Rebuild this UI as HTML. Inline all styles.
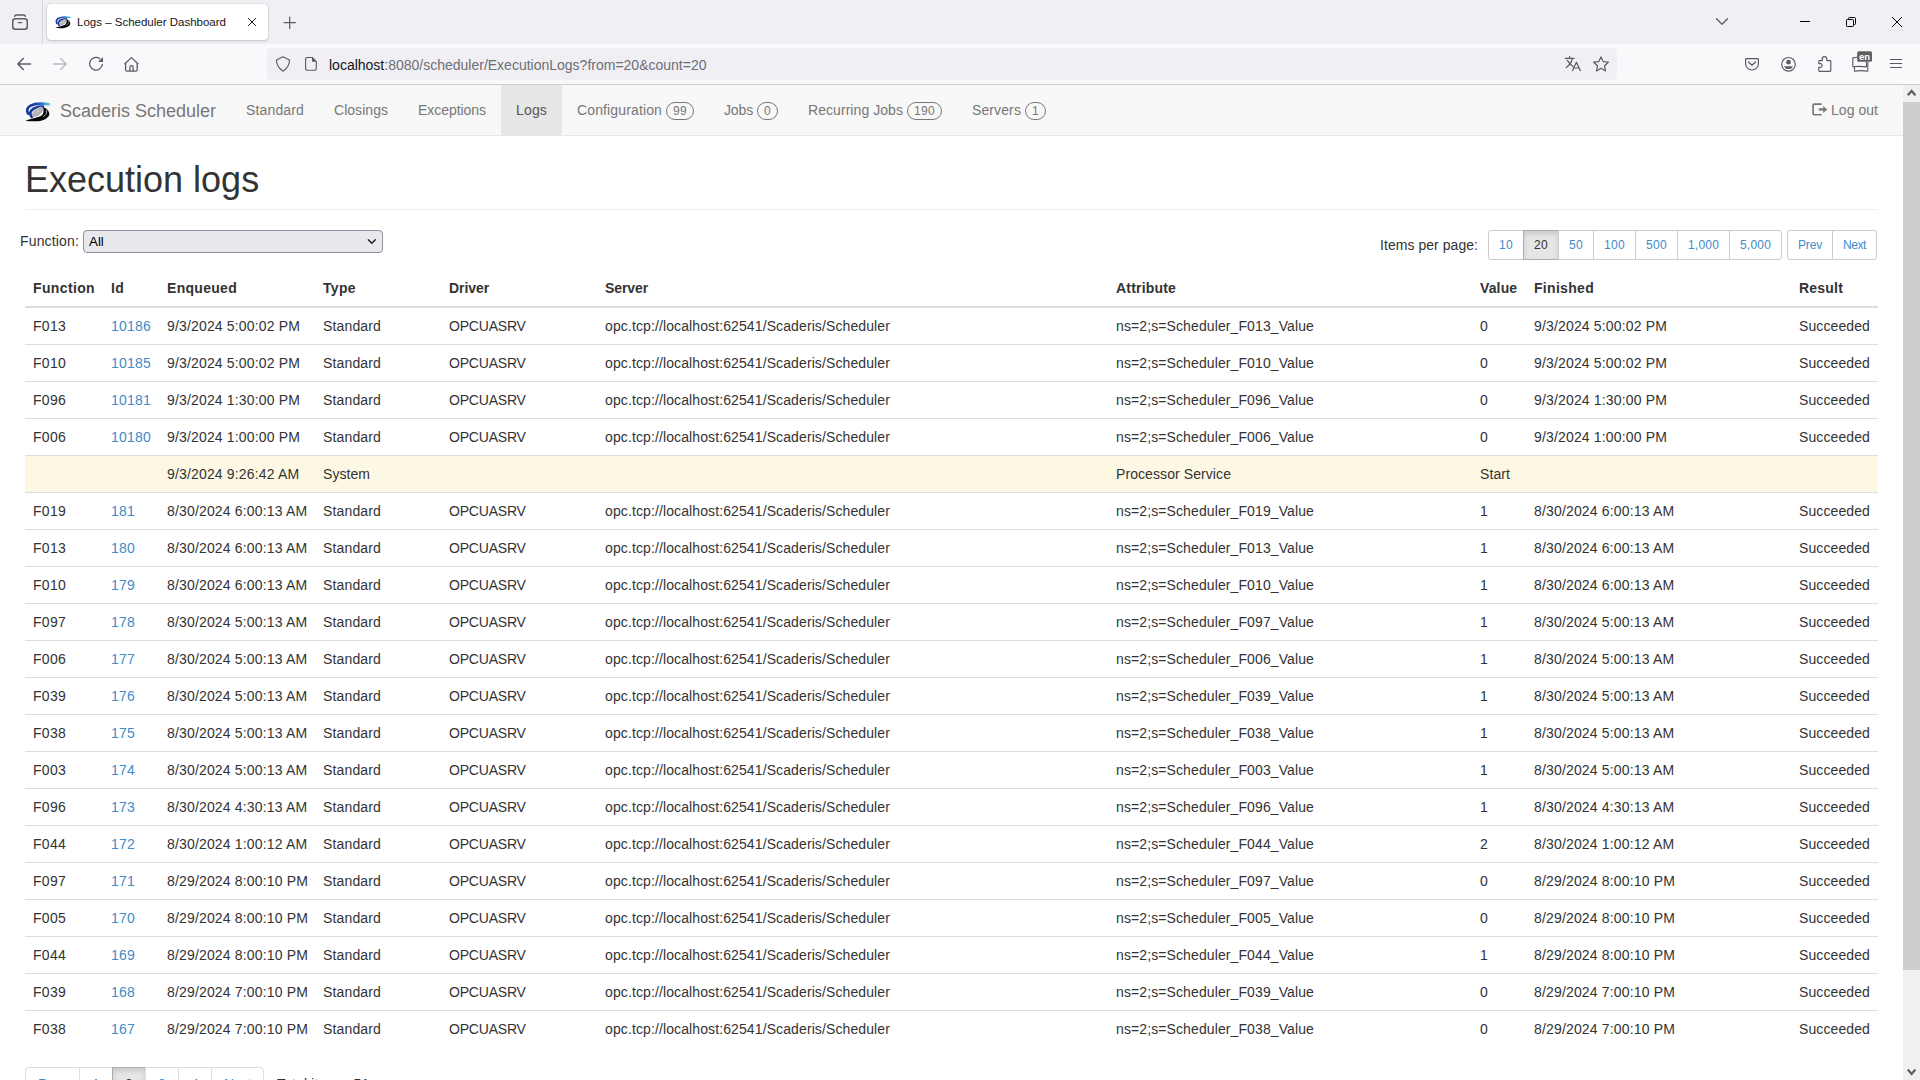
<!DOCTYPE html>
<html><head><meta charset="utf-8">
<style>
*{box-sizing:border-box}
html,body{margin:0;padding:0;width:1920px;height:1080px;overflow:hidden;background:#fff;font-family:"Liberation Sans",sans-serif;color:#333;font-size:14px;line-height:20px}
.a{position:absolute;white-space:nowrap}
svg{position:absolute;overflow:visible}
#tabbar{position:absolute;left:0;top:0;width:1920px;height:44px;background:#f0f0f4}
#toolbar{position:absolute;left:0;top:44px;width:1920px;height:41px;background:#f9f9fb;border-bottom:1px solid #cdcdcd}
#tab{position:absolute;left:47px;top:4px;width:221px;height:36px;background:#fff;border-radius:4px;box-shadow:0 0 1px rgba(0,0,0,.25),0 1px 3px rgba(0,0,0,.18)}
#tabtitle{left:77px;top:15px;font-size:11.5px;line-height:15px;color:#15141a}
#urlbar{position:absolute;left:267px;top:48px;width:1350px;height:32px;background:#f0f0f4;border-radius:4px}
#url{left:329px;top:56px;font-size:14px;line-height:18px;color:#6e6e76}
#url b{font-weight:normal;color:#15141a}
#navbar{position:absolute;left:0;top:85px;width:1903px;height:51px;background:#f8f8f8;border-bottom:1px solid #e7e7e7}
.navi{position:absolute;top:85px;height:50px;color:#777;white-space:nowrap}
.navi.active{background:#e7e7e7;color:#555}
.badge{position:absolute;top:102px;height:18px;border:1px solid #777;border-radius:9px;font-size:12px;line-height:17px;color:#777;text-align:center;white-space:nowrap}
#brand{left:60px;top:101px;font-size:18px;line-height:20px;color:#777}
#logout{left:1831px;top:100px;color:#777}
#h1{left:25px;top:160px;font-size:36px;line-height:39.6px;color:#333}
#hr{position:absolute;left:25px;top:209px;width:1853px;height:1px;background:#eee}
#flabel{left:20px;top:231px}
#sel{position:absolute;left:83px;top:230px;width:300px;height:23px;background:#e9e9ed;border:1px solid #8f8f9d;border-radius:4px;font-size:13.33px;line-height:21px;padding-left:5px;color:#000}
#ipp{left:1380px;top:235px}
.bg{position:absolute;top:230px;height:30px;display:flex}
.bg>span{display:block;height:30px;padding:5px 10px;font-size:12px;line-height:18px;color:#428bca;background:#fff;border:1px solid #ccc;margin-left:-1px;white-space:nowrap}
.bg>span:first-child{margin-left:0;border-radius:3px 0 0 3px}
.bg>span:last-child{border-radius:0 3px 3px 0}
.bg>span.act{background:#e6e6e6;border-color:#adadad;color:#333;box-shadow:inset 0 3px 5px rgba(0,0,0,.125)}
table{position:absolute;left:25px;top:270px;width:1853px;border-collapse:collapse;table-layout:fixed}
th,td{padding:8px;line-height:20px;text-align:left;vertical-align:top;white-space:nowrap;overflow:hidden}
th{font-weight:bold;border-bottom:2px solid #ddd}
td{border-top:1px solid #ddd}
tr.w td{background:#fcf8e3}
td a{color:#428bca;text-decoration:none}
.pg{position:absolute;left:25px;top:1067px;display:flex}
.pg>span{display:block;padding:6px 12px;line-height:20px;border:1px solid #ddd;margin-left:-1px;color:#428bca;background:#fff;white-space:nowrap}
.pg>span:first-child{margin-left:0;border-radius:4px 0 0 4px}
.pg>span:last-child{border-radius:0 4px 4px 0}
.pg>span.act{background:#e6e6e6;border-color:#adadad;color:#333;box-shadow:inset 0 3px 5px rgba(0,0,0,.125)}
#total{left:277px;top:1074px}
#sb{position:absolute;left:1903px;top:85px;width:17px;height:995px;background:#f0f0f0}
#thumb{position:absolute;left:0;top:17px;width:17px;height:868px;background:#cdcdcd}
</style></head><body>
<div id="tabbar"></div>
<div id="toolbar"></div>
<div style="position:absolute;left:42px;top:0;width:1px;height:44px;background:#d4d4d9"></div>
<div id="tab"></div>
<div class="a" id="tabtitle">Logs – Scheduler Dashboard</div>
<div id="urlbar"></div>
<svg style="left:0;top:0" width="1920" height="85" viewBox="0 0 1920 85">
<defs>
<linearGradient id="lgb" x1="0" y1="0" x2="1" y2="0"><stop offset="0" stop-color="#16389c"/><stop offset="0.45" stop-color="#1a46a8"/><stop offset="0.75" stop-color="#2a8fd0"/><stop offset="1" stop-color="#6cc8ec"/></linearGradient>
<radialGradient id="rgg" cx="0.5" cy="0.45" r="0.6"><stop offset="0" stop-color="#c4c4c6"/><stop offset="0.7" stop-color="#b0b0b2"/><stop offset="1" stop-color="#8a8a8c"/></radialGradient>
</defs>
<g fill="none" stroke="#5b5b66" stroke-width="1.5" stroke-linecap="round" stroke-linejoin="round">
 <!-- firefox view -->
 <path d="M14.6 16.2 Q15 15 16.5 15 H23.5 Q25 15 25.4 16.2"/>
 <rect x="12.75" y="18.75" width="14.5" height="10.5" rx="2.5"/>
 <path d="M18.3 22.6 H21.7" stroke-width="1.4"/>
</g>
<!-- tab close & new tab -->
<path d="M248.4 18.4 L255.6 25.6 M255.6 18.4 L248.4 25.6" stroke="#15141a" stroke-width="1" stroke-linecap="round"/>
<path d="M284 22.6 H295.4 M289.7 17.1 V28.6" stroke="#5b5b66" stroke-width="1.25" stroke-linecap="round"/>
<!-- window controls -->
<path d="M1716.5 18.7 L1722 24.2 L1727.5 18.7" fill="none" stroke="#5b5b66" stroke-width="1.3" stroke-linecap="round" stroke-linejoin="round"/>
<path d="M1800 21.5 H1810" stroke="#000" stroke-width="1"/>
<g fill="none" stroke="#000" stroke-width="1">
 <rect x="1846.5" y="19.5" width="7" height="7" rx="0.8"/>
 <path d="M1848.5 19.5 V18.5 Q1848.5 17.5 1849.5 17.5 H1854.5 Q1855.5 17.5 1855.5 18.5 V23.5 Q1855.5 24.5 1854.5 24.5 H1853.5"/>
 <path d="M1892 17 L1902 27 M1902 17 L1892 27"/>
</g>
<!-- nav buttons -->
<g fill="none" stroke="#5b5b66" stroke-width="1.5" stroke-linecap="round" stroke-linejoin="round">
 <path d="M30.5 64 H17.8 M23.3 58.5 L17.8 64 L23.3 69.5"/>
 <path d="M53.5 64 H66.2 M60.7 58.5 L66.2 64 L60.7 69.5" stroke="#b9b9c0"/>
 <path d="M102.3 64.5 A6.35 6.35 0 1 1 99.8 58.7" stroke-width="1.3"/>
 <path d="M124.9 63.8 L131.4 57.6 L137.9 63.8 M125.6 63.2 V69.7 Q125.6 71.1 127 71.1 H135.8 Q137.2 71.1 137.2 69.7 V63.2 M129.9 71 V67.2 Q129.9 65.6 131.5 65.6 Q133.1 65.6 133.1 67.2 V71" stroke-width="1.3"/>
</g>
<path d="M98 61.9 L103 61.9 L103 56.9 Z" fill="#5b5b66"/>
<!-- urlbar icons -->
<g fill="none" stroke="#5b5b66" stroke-width="1.15" stroke-linejoin="round">
 <path d="M283 56.8 L289.5 60.1 Q289.6 66.8 283 71.2 Q276.4 66.8 276.5 60.1 Z"/>
 <path d="M312.3 57.5 H307.2 Q305.6 57.5 305.6 59.1 V68.6 Q305.6 70.2 307.2 70.2 H314.7 Q316.3 70.2 316.3 68.6 V61.6 Z"/>
</g>
<path d="M312 57.2 L316.6 61.8 H312 Z" fill="#5b5b66"/>
<!-- translate -->
<g fill="none" stroke="#5b5b66" stroke-width="1.2" stroke-linecap="round" stroke-linejoin="round">
 <path d="M1565.3 58.3 H1574.2 M1569.6 56.3 V58.3 M1567.4 60.4 Q1569.5 64.3 1573.2 66.8 M1572.4 58.5 Q1571 64.2 1566.2 67.6"/>
 <path d="M1572.4 70.7 L1576.4 62.2 L1580.4 70.7 M1573.8 68 H1579"/>
 <path d="M1601 56.9 L1603.2 61.6 L1608.3 62.2 L1604.5 65.7 L1605.5 70.9 L1601 68.3 L1596.5 70.9 L1597.5 65.7 L1593.7 62.2 L1598.8 61.6 Z"/>
</g>
<!-- right toolbar -->
<g fill="none" stroke="#5b5b66" stroke-width="1.2" stroke-linecap="round" stroke-linejoin="round">
 <path d="M1746.3 58.6 H1757.7 Q1758.4 58.6 1758.4 59.4 V63.6 A6.4 6.4 0 0 1 1745.6 63.6 V59.4 Q1745.6 58.6 1746.3 58.6 Z"/>
 <path d="M1748.6 62 L1752 65.3 L1755.4 62" stroke-width="1.3"/>
 <circle cx="1788.5" cy="64.3" r="6.8"/>
 <path d="M1822.2 60.6 V59 A2.3 2.3 0 0 1 1826.8 59 V60.6 H1830 Q1830.8 60.6 1830.8 61.4 V70.6 Q1830.8 71.4 1830 71.4 H1819.6 Q1818.8 71.4 1818.8 70.6 V67.3 H1820.3 A1.85 1.85 0 0 0 1820.3 63.6 H1818.8 V61.4 Q1818.8 60.6 1819.6 60.6 Z"/>
 <path d="M1890.4 59.5 H1901.6 M1890.4 63.5 H1901.6 M1890.4 67.5 H1901.6"/>
</g>
<circle cx="1788.5" cy="62.2" r="2.4" fill="#5b5b66"/>
<path d="M1784.3 66.2 H1792.7 Q1792.3 69 1788.5 69 Q1784.7 69 1784.3 66.2 Z" fill="#5b5b66"/>
<g fill="none" stroke="#5b5b66" stroke-width="1.1" stroke-linejoin="round">
 <path d="M1858 57.2 Q1855 57.3 1852.8 57.9 V66.7 Q1860 66 1866.5 66.9 V62"/>
 <path d="M1854.5 66.8 V71.2 Q1861 70 1867.8 71.2 V62"/>
</g>
<rect x="1857.2" y="51.2" width="14.8" height="10.6" rx="1.6" fill="#606060"/>
<text x="1859" y="59.8" font-family="Liberation Sans" font-size="9.5" font-weight="bold" fill="#fff">en</text>
</svg>

<svg style="left:55px;top:15.5px" width="16" height="13" viewBox="0 0 26 21">
<path d="M24.6 2.4 C18 1.3 10 1.3 5.2 4 C2 5.9 1.3 9 3.3 12" fill="none" stroke="url(#lgb)" stroke-width="2.7" stroke-linecap="round"/>
<path d="M18.2 4.6 C12.8 4.6 8.6 6.2 6.4 8.8 C5 10.6 5.2 13.2 6.8 15.3" fill="none" stroke="#17399e" stroke-width="2.7" stroke-linecap="round"/>
<ellipse cx="12.9" cy="10" rx="6.8" ry="3.4" transform="rotate(-40 12.9 10)" fill="url(#rgg)"/>
<path d="M0.3 19.2 C5 17.4 11 16.6 15.5 14.6 C18.6 13 19.8 10 18.3 5 C21.5 6 24.9 9 24.9 12.2 C24.7 16 19 19.3 13 19.7 C8 20 3.5 19.8 0.3 19.2 Z" fill="#050505"/>
<path d="M21.6 8.2 C22.8 11 21.4 13.8 18.2 15" fill="none" stroke="#fff" stroke-width="0.8" opacity="0.85"/>
</svg>

<div class="a" id="url"><b>localhost</b>:8080/scheduler/ExecutionLogs?from=20&amp;count=20</div>

<div id="navbar"></div>
<!--LOGO--><svg style="left:25px;top:102px" width="25.5" height="20.5" viewBox="0 0 26 21">
<path d="M24.6 2.4 C18 1.3 10 1.3 5.2 4 C2 5.9 1.3 9 3.3 12" fill="none" stroke="url(#lgb)" stroke-width="2.7" stroke-linecap="round"/>
<path d="M18.2 4.6 C12.8 4.6 8.6 6.2 6.4 8.8 C5 10.6 5.2 13.2 6.8 15.3" fill="none" stroke="#17399e" stroke-width="2.7" stroke-linecap="round"/>
<ellipse cx="12.9" cy="10" rx="6.8" ry="3.4" transform="rotate(-40 12.9 10)" fill="url(#rgg)"/>
<path d="M0.3 19.2 C5 17.4 11 16.6 15.5 14.6 C18.6 13 19.8 10 18.3 5 C21.5 6 24.9 9 24.9 12.2 C24.7 16 19 19.3 13 19.7 C8 20 3.5 19.8 0.3 19.2 Z" fill="#050505"/>
<path d="M21.6 8.2 C22.8 11 21.4 13.8 18.2 15" fill="none" stroke="#fff" stroke-width="0.8" opacity="0.85"/>
</svg>

<div class="a" id="brand">Scaderis Scheduler</div>
<div class="navi" style="left:231px"><span style="position:absolute;left:15px;top:15px"><span style="letter-spacing:0.147px">Standard</span></span></div><div class="navi" style="left:319px"><span style="position:absolute;left:15px;top:15px"><span style="letter-spacing:0.039px">Closings</span></span></div><div class="navi" style="left:403px"><span style="position:absolute;left:15px;top:15px"><span style="letter-spacing:-0.048px">Exceptions</span></span></div><div class="navi active" style="left:501px;width:61px"><span style="position:absolute;left:15px;top:15px"><span style="letter-spacing:0.160px">Logs</span></span></div><div class="navi" style="left:562px"><span style="position:absolute;left:15px;top:15px"><span style="letter-spacing:0.133px">Configuration</span></span></div><div class="badge" style="left:666px;width:28px"><span style="letter-spacing:0.326px">99</span></div><div class="navi" style="left:709px"><span style="position:absolute;left:15px;top:15px"><span style="letter-spacing:-0.143px">Jobs</span></span></div><div class="badge" style="left:757px;width:21px"><span style="letter-spacing:0.326px">0</span></div><div class="navi" style="left:793px"><span style="position:absolute;left:15px;top:15px"><span style="letter-spacing:0.061px">Recurring Jobs</span></span></div><div class="badge" style="left:907px;width:35px"><span style="letter-spacing:0.326px">190</span></div><div class="navi" style="left:957px"><span style="position:absolute;left:15px;top:15px"><span style="letter-spacing:0.109px">Servers</span></span></div><div class="badge" style="left:1025px;width:21px"><span style="letter-spacing:0.326px">1</span></div>
<svg style="left:0;top:0" width="1" height="1"><path d="M1821.6 103.3 H1814.2 Q1812.2 103.3 1812.2 105.3 V113.6 Q1812.2 115.6 1814.2 115.6 H1821.6 V114 H1814.8 Q1813.9 114 1813.9 113.1 V105.8 Q1813.9 104.9 1814.8 104.9 H1821.6 Z M1818.8 108.3 H1823.2 V105.9 L1827.2 109.45 L1823.2 113 V110.6 H1818.8 Z" fill="#777"/></svg>
<div class="a" id="logout"><span style="letter-spacing:0.041px">Log out</span></div>
<div class="a" id="h1">Execution logs</div>
<div id="hr"></div>
<div class="a" id="flabel"><span style="letter-spacing:0.157px">Function:</span></div>
<div id="sel">All</div>
<svg style="left:0;top:0" width="1" height="1"><path d="M368.3 239.8 L371.8 243.3 L375.3 239.8" fill="none" stroke="#1b1b1f" stroke-width="1.3" stroke-linecap="round" stroke-linejoin="round"/></svg>
<div class="a" id="ipp"><span style="letter-spacing:0.048px">Items per page:</span></div>
<div class="bg" style="left:1488px"><span><span style="letter-spacing:0.326px">10</span></span><span class="act"><span style="letter-spacing:0.326px">20</span></span><span><span style="letter-spacing:0.326px">50</span></span><span><span style="letter-spacing:0.326px">100</span></span><span><span style="letter-spacing:0.326px">500</span></span><span><span style="letter-spacing:0.194px">1,000</span></span><span><span style="letter-spacing:0.194px">5,000</span></span></div>
<div class="bg" style="left:1787px"><span><span style="letter-spacing:-0.168px">Prev</span></span><span><span style="letter-spacing:-0.418px">Next</span></span></div>
<table>
<colgroup><col style="width:78px"><col style="width:56px"><col style="width:156px"><col style="width:126px"><col style="width:156px"><col style="width:511px"><col style="width:364px"><col style="width:54px"><col style="width:265px"><col style="width:87px"></colgroup>
<thead><tr><th><span style="letter-spacing:0.363px">Function</span></th><th><span style="letter-spacing:0.279px">Id</span></th><th><span style="letter-spacing:0.291px">Enqueued</span></th><th><span style="letter-spacing:0.331px">Type</span></th><th><span style="letter-spacing:-0.078px">Driver</span></th><th><span style="letter-spacing:-0.099px">Server</span></th><th><span style="letter-spacing:0.186px">Attribute</span></th><th><span style="letter-spacing:0.130px">Value</span></th><th><span style="letter-spacing:0.305px">Finished</span></th><th><span style="letter-spacing:0.202px">Result</span></th></tr></thead>
<tbody>
<tr><td><span style="letter-spacing:0.272px">F013</span></td><td><a><span style="letter-spacing:0.214px">10186</span></a></td><td><span style="letter-spacing:0.159px">9/3/2024 5:00:02 PM</span></td><td><span style="letter-spacing:0.147px">Standard</span></td><td><span style="letter-spacing:-0.197px">OPCUASRV</span></td><td><span style="letter-spacing:0.110px">opc.tcp://localhost:62541/Scaderis/Scheduler</span></td><td><span style="letter-spacing:0.106px">ns=2;s=Scheduler_F013_Value</span></td><td><span style="letter-spacing:0.214px">0</span></td><td><span style="letter-spacing:0.159px">9/3/2024 5:00:02 PM</span></td><td><span style="letter-spacing:0.105px">Succeeded</span></td></tr>
<tr><td><span style="letter-spacing:0.272px">F010</span></td><td><a><span style="letter-spacing:0.214px">10185</span></a></td><td><span style="letter-spacing:0.159px">9/3/2024 5:00:02 PM</span></td><td><span style="letter-spacing:0.147px">Standard</span></td><td><span style="letter-spacing:-0.197px">OPCUASRV</span></td><td><span style="letter-spacing:0.110px">opc.tcp://localhost:62541/Scaderis/Scheduler</span></td><td><span style="letter-spacing:0.106px">ns=2;s=Scheduler_F010_Value</span></td><td><span style="letter-spacing:0.214px">0</span></td><td><span style="letter-spacing:0.159px">9/3/2024 5:00:02 PM</span></td><td><span style="letter-spacing:0.105px">Succeeded</span></td></tr>
<tr><td><span style="letter-spacing:0.272px">F096</span></td><td><a><span style="letter-spacing:0.214px">10181</span></a></td><td><span style="letter-spacing:0.159px">9/3/2024 1:30:00 PM</span></td><td><span style="letter-spacing:0.147px">Standard</span></td><td><span style="letter-spacing:-0.197px">OPCUASRV</span></td><td><span style="letter-spacing:0.110px">opc.tcp://localhost:62541/Scaderis/Scheduler</span></td><td><span style="letter-spacing:0.106px">ns=2;s=Scheduler_F096_Value</span></td><td><span style="letter-spacing:0.214px">0</span></td><td><span style="letter-spacing:0.159px">9/3/2024 1:30:00 PM</span></td><td><span style="letter-spacing:0.105px">Succeeded</span></td></tr>
<tr><td><span style="letter-spacing:0.272px">F006</span></td><td><a><span style="letter-spacing:0.214px">10180</span></a></td><td><span style="letter-spacing:0.159px">9/3/2024 1:00:00 PM</span></td><td><span style="letter-spacing:0.147px">Standard</span></td><td><span style="letter-spacing:-0.197px">OPCUASRV</span></td><td><span style="letter-spacing:0.110px">opc.tcp://localhost:62541/Scaderis/Scheduler</span></td><td><span style="letter-spacing:0.106px">ns=2;s=Scheduler_F006_Value</span></td><td><span style="letter-spacing:0.214px">0</span></td><td><span style="letter-spacing:0.159px">9/3/2024 1:00:00 PM</span></td><td><span style="letter-spacing:0.105px">Succeeded</span></td></tr>
<tr class="w"><td></td><td></td><td><span style="letter-spacing:0.159px">9/3/2024 9:26:42 AM</span></td><td><span style="letter-spacing:0.054px">System</span></td><td></td><td></td><td><span style="letter-spacing:0.083px">Processor Service</span></td><td><span style="letter-spacing:0.087px">Start</span></td><td></td><td></td></tr>
<tr><td><span style="letter-spacing:0.272px">F019</span></td><td><a><span style="letter-spacing:0.214px">181</span></a></td><td><span style="letter-spacing:0.161px">8/30/2024 6:00:13 AM</span></td><td><span style="letter-spacing:0.147px">Standard</span></td><td><span style="letter-spacing:-0.197px">OPCUASRV</span></td><td><span style="letter-spacing:0.110px">opc.tcp://localhost:62541/Scaderis/Scheduler</span></td><td><span style="letter-spacing:0.106px">ns=2;s=Scheduler_F019_Value</span></td><td><span style="letter-spacing:0.214px">1</span></td><td><span style="letter-spacing:0.161px">8/30/2024 6:00:13 AM</span></td><td><span style="letter-spacing:0.105px">Succeeded</span></td></tr>
<tr><td><span style="letter-spacing:0.272px">F013</span></td><td><a><span style="letter-spacing:0.214px">180</span></a></td><td><span style="letter-spacing:0.161px">8/30/2024 6:00:13 AM</span></td><td><span style="letter-spacing:0.147px">Standard</span></td><td><span style="letter-spacing:-0.197px">OPCUASRV</span></td><td><span style="letter-spacing:0.110px">opc.tcp://localhost:62541/Scaderis/Scheduler</span></td><td><span style="letter-spacing:0.106px">ns=2;s=Scheduler_F013_Value</span></td><td><span style="letter-spacing:0.214px">1</span></td><td><span style="letter-spacing:0.161px">8/30/2024 6:00:13 AM</span></td><td><span style="letter-spacing:0.105px">Succeeded</span></td></tr>
<tr><td><span style="letter-spacing:0.272px">F010</span></td><td><a><span style="letter-spacing:0.214px">179</span></a></td><td><span style="letter-spacing:0.161px">8/30/2024 6:00:13 AM</span></td><td><span style="letter-spacing:0.147px">Standard</span></td><td><span style="letter-spacing:-0.197px">OPCUASRV</span></td><td><span style="letter-spacing:0.110px">opc.tcp://localhost:62541/Scaderis/Scheduler</span></td><td><span style="letter-spacing:0.106px">ns=2;s=Scheduler_F010_Value</span></td><td><span style="letter-spacing:0.214px">1</span></td><td><span style="letter-spacing:0.161px">8/30/2024 6:00:13 AM</span></td><td><span style="letter-spacing:0.105px">Succeeded</span></td></tr>
<tr><td><span style="letter-spacing:0.272px">F097</span></td><td><a><span style="letter-spacing:0.214px">178</span></a></td><td><span style="letter-spacing:0.161px">8/30/2024 5:00:13 AM</span></td><td><span style="letter-spacing:0.147px">Standard</span></td><td><span style="letter-spacing:-0.197px">OPCUASRV</span></td><td><span style="letter-spacing:0.110px">opc.tcp://localhost:62541/Scaderis/Scheduler</span></td><td><span style="letter-spacing:0.106px">ns=2;s=Scheduler_F097_Value</span></td><td><span style="letter-spacing:0.214px">1</span></td><td><span style="letter-spacing:0.161px">8/30/2024 5:00:13 AM</span></td><td><span style="letter-spacing:0.105px">Succeeded</span></td></tr>
<tr><td><span style="letter-spacing:0.272px">F006</span></td><td><a><span style="letter-spacing:0.214px">177</span></a></td><td><span style="letter-spacing:0.161px">8/30/2024 5:00:13 AM</span></td><td><span style="letter-spacing:0.147px">Standard</span></td><td><span style="letter-spacing:-0.197px">OPCUASRV</span></td><td><span style="letter-spacing:0.110px">opc.tcp://localhost:62541/Scaderis/Scheduler</span></td><td><span style="letter-spacing:0.106px">ns=2;s=Scheduler_F006_Value</span></td><td><span style="letter-spacing:0.214px">1</span></td><td><span style="letter-spacing:0.161px">8/30/2024 5:00:13 AM</span></td><td><span style="letter-spacing:0.105px">Succeeded</span></td></tr>
<tr><td><span style="letter-spacing:0.272px">F039</span></td><td><a><span style="letter-spacing:0.214px">176</span></a></td><td><span style="letter-spacing:0.161px">8/30/2024 5:00:13 AM</span></td><td><span style="letter-spacing:0.147px">Standard</span></td><td><span style="letter-spacing:-0.197px">OPCUASRV</span></td><td><span style="letter-spacing:0.110px">opc.tcp://localhost:62541/Scaderis/Scheduler</span></td><td><span style="letter-spacing:0.106px">ns=2;s=Scheduler_F039_Value</span></td><td><span style="letter-spacing:0.214px">1</span></td><td><span style="letter-spacing:0.161px">8/30/2024 5:00:13 AM</span></td><td><span style="letter-spacing:0.105px">Succeeded</span></td></tr>
<tr><td><span style="letter-spacing:0.272px">F038</span></td><td><a><span style="letter-spacing:0.214px">175</span></a></td><td><span style="letter-spacing:0.161px">8/30/2024 5:00:13 AM</span></td><td><span style="letter-spacing:0.147px">Standard</span></td><td><span style="letter-spacing:-0.197px">OPCUASRV</span></td><td><span style="letter-spacing:0.110px">opc.tcp://localhost:62541/Scaderis/Scheduler</span></td><td><span style="letter-spacing:0.106px">ns=2;s=Scheduler_F038_Value</span></td><td><span style="letter-spacing:0.214px">1</span></td><td><span style="letter-spacing:0.161px">8/30/2024 5:00:13 AM</span></td><td><span style="letter-spacing:0.105px">Succeeded</span></td></tr>
<tr><td><span style="letter-spacing:0.272px">F003</span></td><td><a><span style="letter-spacing:0.214px">174</span></a></td><td><span style="letter-spacing:0.161px">8/30/2024 5:00:13 AM</span></td><td><span style="letter-spacing:0.147px">Standard</span></td><td><span style="letter-spacing:-0.197px">OPCUASRV</span></td><td><span style="letter-spacing:0.110px">opc.tcp://localhost:62541/Scaderis/Scheduler</span></td><td><span style="letter-spacing:0.106px">ns=2;s=Scheduler_F003_Value</span></td><td><span style="letter-spacing:0.214px">1</span></td><td><span style="letter-spacing:0.161px">8/30/2024 5:00:13 AM</span></td><td><span style="letter-spacing:0.105px">Succeeded</span></td></tr>
<tr><td><span style="letter-spacing:0.272px">F096</span></td><td><a><span style="letter-spacing:0.214px">173</span></a></td><td><span style="letter-spacing:0.161px">8/30/2024 4:30:13 AM</span></td><td><span style="letter-spacing:0.147px">Standard</span></td><td><span style="letter-spacing:-0.197px">OPCUASRV</span></td><td><span style="letter-spacing:0.110px">opc.tcp://localhost:62541/Scaderis/Scheduler</span></td><td><span style="letter-spacing:0.106px">ns=2;s=Scheduler_F096_Value</span></td><td><span style="letter-spacing:0.214px">1</span></td><td><span style="letter-spacing:0.161px">8/30/2024 4:30:13 AM</span></td><td><span style="letter-spacing:0.105px">Succeeded</span></td></tr>
<tr><td><span style="letter-spacing:0.272px">F044</span></td><td><a><span style="letter-spacing:0.214px">172</span></a></td><td><span style="letter-spacing:0.161px">8/30/2024 1:00:12 AM</span></td><td><span style="letter-spacing:0.147px">Standard</span></td><td><span style="letter-spacing:-0.197px">OPCUASRV</span></td><td><span style="letter-spacing:0.110px">opc.tcp://localhost:62541/Scaderis/Scheduler</span></td><td><span style="letter-spacing:0.106px">ns=2;s=Scheduler_F044_Value</span></td><td><span style="letter-spacing:0.214px">2</span></td><td><span style="letter-spacing:0.161px">8/30/2024 1:00:12 AM</span></td><td><span style="letter-spacing:0.105px">Succeeded</span></td></tr>
<tr><td><span style="letter-spacing:0.272px">F097</span></td><td><a><span style="letter-spacing:0.214px">171</span></a></td><td><span style="letter-spacing:0.161px">8/29/2024 8:00:10 PM</span></td><td><span style="letter-spacing:0.147px">Standard</span></td><td><span style="letter-spacing:-0.197px">OPCUASRV</span></td><td><span style="letter-spacing:0.110px">opc.tcp://localhost:62541/Scaderis/Scheduler</span></td><td><span style="letter-spacing:0.106px">ns=2;s=Scheduler_F097_Value</span></td><td><span style="letter-spacing:0.214px">0</span></td><td><span style="letter-spacing:0.161px">8/29/2024 8:00:10 PM</span></td><td><span style="letter-spacing:0.105px">Succeeded</span></td></tr>
<tr><td><span style="letter-spacing:0.272px">F005</span></td><td><a><span style="letter-spacing:0.214px">170</span></a></td><td><span style="letter-spacing:0.161px">8/29/2024 8:00:10 PM</span></td><td><span style="letter-spacing:0.147px">Standard</span></td><td><span style="letter-spacing:-0.197px">OPCUASRV</span></td><td><span style="letter-spacing:0.110px">opc.tcp://localhost:62541/Scaderis/Scheduler</span></td><td><span style="letter-spacing:0.106px">ns=2;s=Scheduler_F005_Value</span></td><td><span style="letter-spacing:0.214px">0</span></td><td><span style="letter-spacing:0.161px">8/29/2024 8:00:10 PM</span></td><td><span style="letter-spacing:0.105px">Succeeded</span></td></tr>
<tr><td><span style="letter-spacing:0.272px">F044</span></td><td><a><span style="letter-spacing:0.214px">169</span></a></td><td><span style="letter-spacing:0.161px">8/29/2024 8:00:10 PM</span></td><td><span style="letter-spacing:0.147px">Standard</span></td><td><span style="letter-spacing:-0.197px">OPCUASRV</span></td><td><span style="letter-spacing:0.110px">opc.tcp://localhost:62541/Scaderis/Scheduler</span></td><td><span style="letter-spacing:0.106px">ns=2;s=Scheduler_F044_Value</span></td><td><span style="letter-spacing:0.214px">1</span></td><td><span style="letter-spacing:0.161px">8/29/2024 8:00:10 PM</span></td><td><span style="letter-spacing:0.105px">Succeeded</span></td></tr>
<tr><td><span style="letter-spacing:0.272px">F039</span></td><td><a><span style="letter-spacing:0.214px">168</span></a></td><td><span style="letter-spacing:0.161px">8/29/2024 7:00:10 PM</span></td><td><span style="letter-spacing:0.147px">Standard</span></td><td><span style="letter-spacing:-0.197px">OPCUASRV</span></td><td><span style="letter-spacing:0.110px">opc.tcp://localhost:62541/Scaderis/Scheduler</span></td><td><span style="letter-spacing:0.106px">ns=2;s=Scheduler_F039_Value</span></td><td><span style="letter-spacing:0.214px">0</span></td><td><span style="letter-spacing:0.161px">8/29/2024 7:00:10 PM</span></td><td><span style="letter-spacing:0.105px">Succeeded</span></td></tr>
<tr><td><span style="letter-spacing:0.272px">F038</span></td><td><a><span style="letter-spacing:0.214px">167</span></a></td><td><span style="letter-spacing:0.161px">8/29/2024 7:00:10 PM</span></td><td><span style="letter-spacing:0.147px">Standard</span></td><td><span style="letter-spacing:-0.197px">OPCUASRV</span></td><td><span style="letter-spacing:0.110px">opc.tcp://localhost:62541/Scaderis/Scheduler</span></td><td><span style="letter-spacing:0.106px">ns=2;s=Scheduler_F038_Value</span></td><td><span style="letter-spacing:0.214px">0</span></td><td><span style="letter-spacing:0.161px">8/29/2024 7:00:10 PM</span></td><td><span style="letter-spacing:0.105px">Succeeded</span></td></tr>
</tbody>
</table>
<div class="pg"><span><span style="letter-spacing:0.053px">Prev</span></span><span><span style="letter-spacing:0.214px">1</span></span><span class="act"><span style="letter-spacing:0.214px">2</span></span><span><span style="letter-spacing:0.214px">3</span></span><span><span style="letter-spacing:0.214px">4</span></span><span><span style="letter-spacing:-0.447px">Next</span></span></div>
<div class="a" id="total"><span style="letter-spacing:0.146px">Total items: 51</span></div>
<div id="sb"><div id="thumb"></div></div>
<svg style="left:0;top:0" width="1" height="1"><path d="M1907.8 95.3 L1911.6 91 L1915.4 95.3 M1907.8 1069.6 L1911.6 1073.9 L1915.4 1069.6" fill="none" stroke="#606060" stroke-width="2.3"/></svg>
</body></html>
